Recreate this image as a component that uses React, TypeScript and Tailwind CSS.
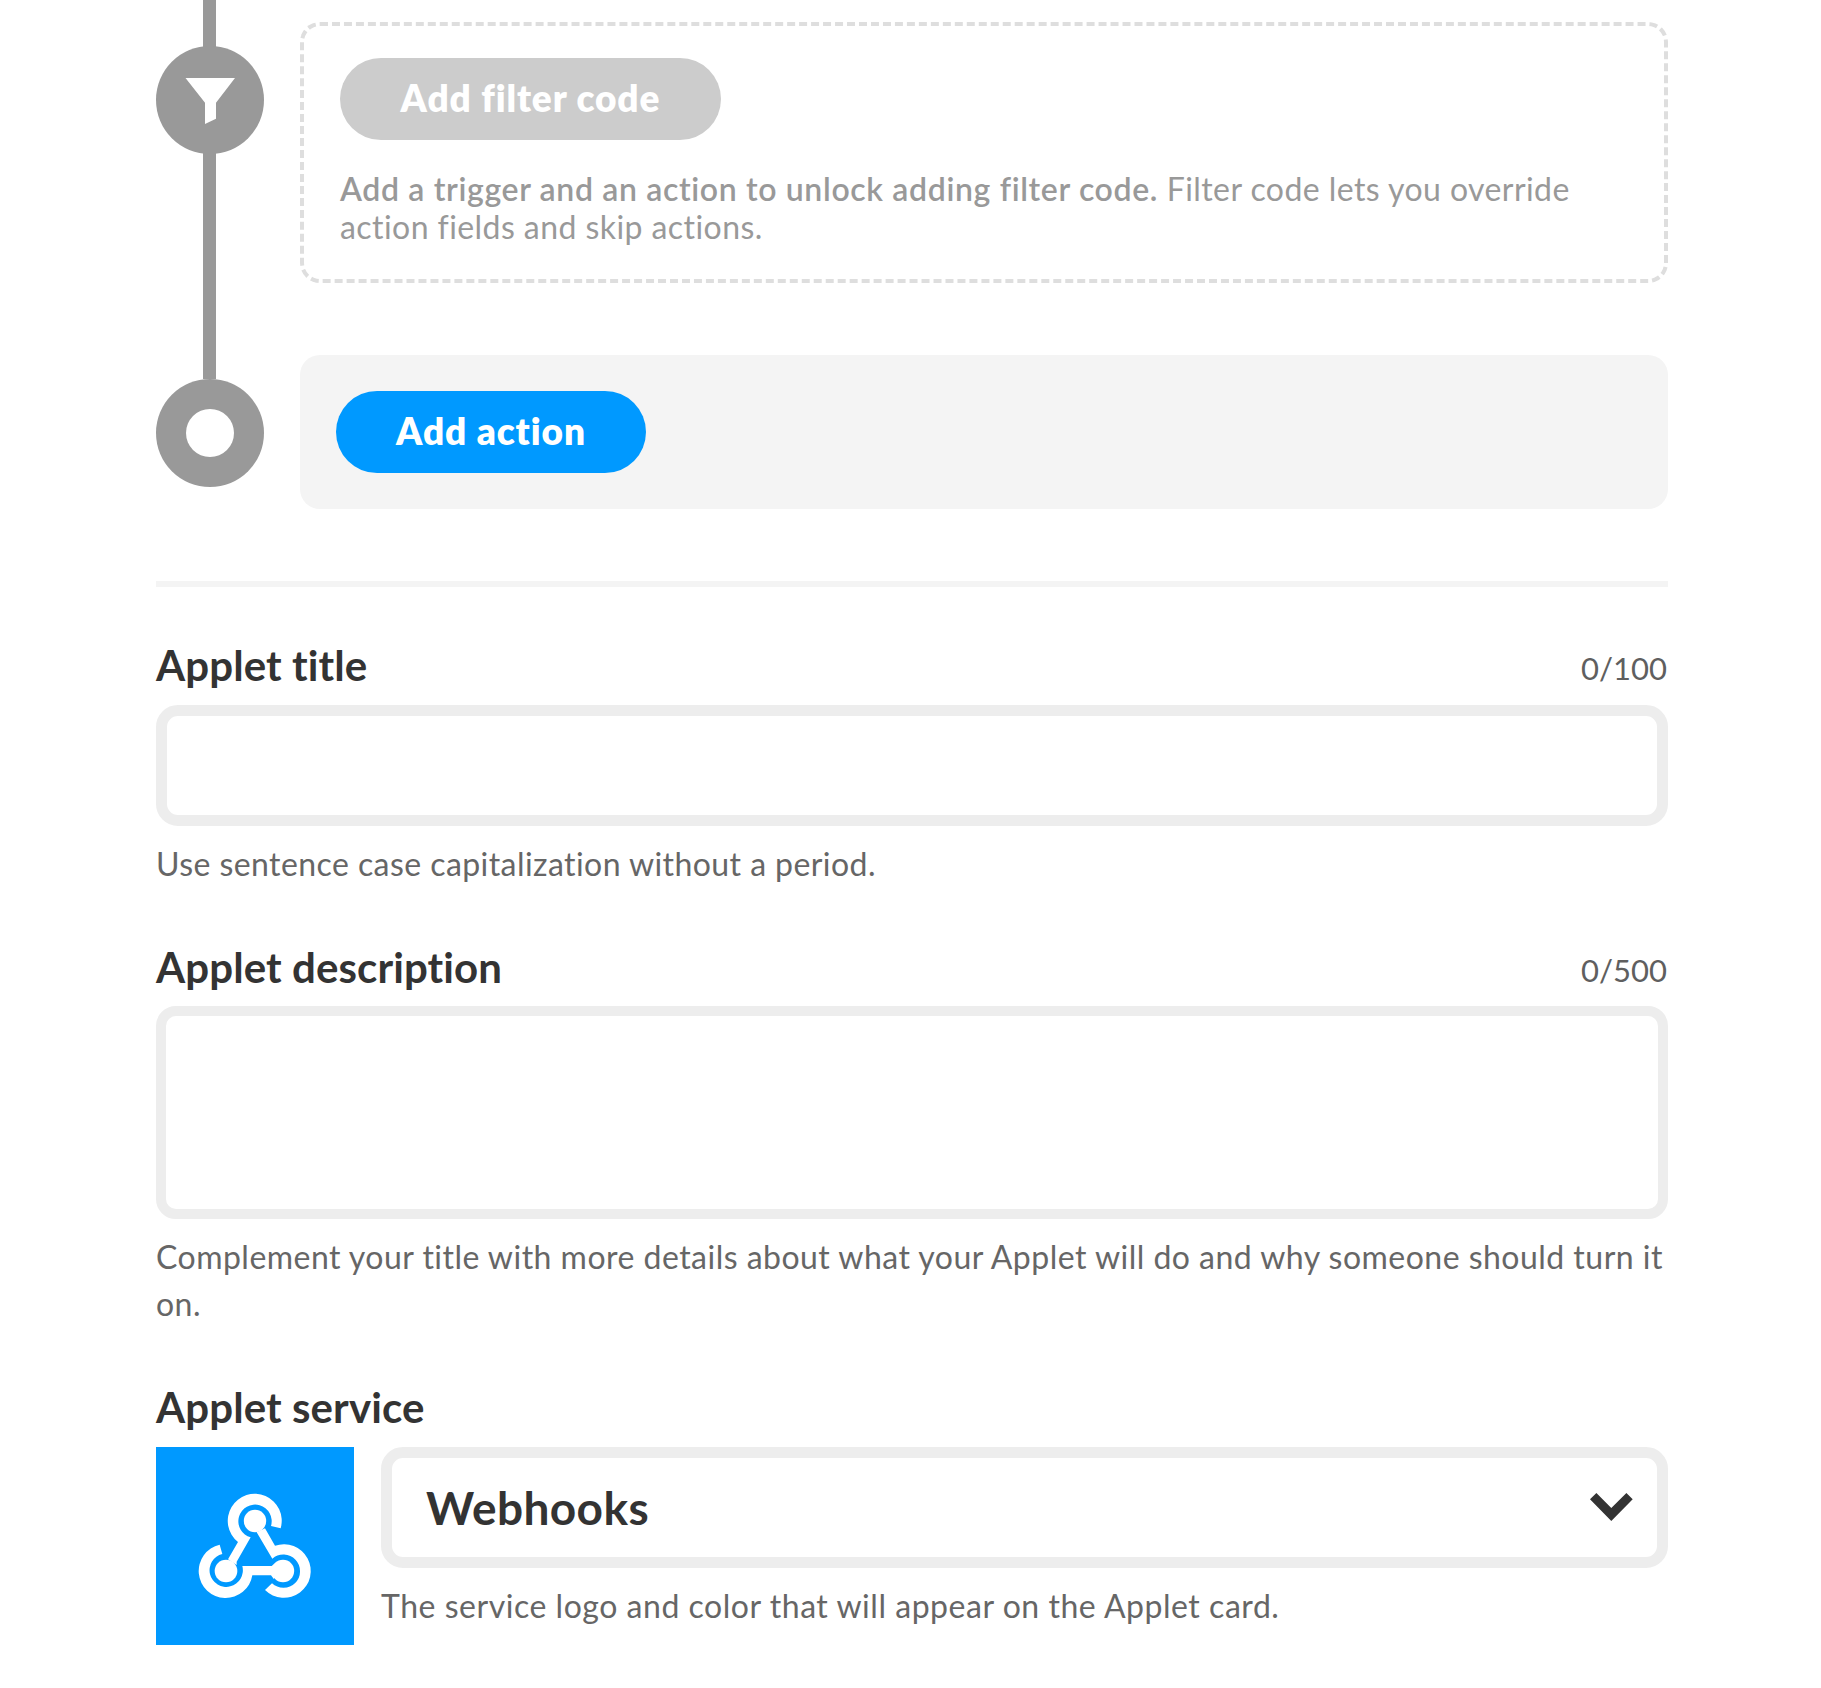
import type { ReactNode } from "react";

function FilterIcon() {
  return (
    <svg viewBox="0 0 108 108" className="size-[108px]" fill="#fff">
      <path d="M29.5 32H79L60 56.7V72.7L49 78V56.7Z" />
    </svg>
  );
}

function WebhooksLogo() {
  return (
    <svg viewBox="0 0 390 375" className="h-[125px] w-[130px]" fill="#fff">
      <circle cx="195" cy="108" r="33.5" />
      <circle cx="108" cy="258" r="34" />
      <circle cx="279" cy="258" r="33.5" />
      <path d="M272 130A81 81 0 1 0 144 171L114 223L140 240V230L182 157A50 50 0 1 1 243 123Z" />
      <path d="M89 179A81 81 0 1 0 187 271H243L252 283L258 232L245 243H157A50 50 0 1 1 97 207Z" />
      <path d="M225 315A80.5 80.5 0 1 0 255 182L225 130L200 142L247 221A50 50 0 1 1 246 295Z" />
    </svg>
  );
}

function Chevron() {
  return (
    <svg viewBox="0 0 43 28" className="mb-px h-7 w-[43px]" fill="#333">
      <path d="M0 6.3L6.4 0L21.3 15L36.4 0L42.7 6.3L21.3 28Z" />
    </svg>
  );
}

function Label({ children, counter }: { children: ReactNode; counter?: string }) {
  return (
    <div className="flex h-[50px] items-baseline justify-between pt-px text-[#333]">
      <label className="text-[42px] leading-[50px] font-bold tracking-[0.1px]">{children}</label>
      {counter && (
        <span className="-translate-y-px pr-px text-[31px] leading-[38px] text-[#5f5f5f]">{counter}</span>
      )}
    </div>
  );
}

function Help({ children, spacing = "tracking-[0.43px]" }: { children: ReactNode; spacing?: string }) {
  return <p className={`mt-3.5 text-[32px] leading-[47px] text-[#666] ${spacing}`}>{children}</p>;
}

export default function App() {
  return (
    <main className="min-h-[1688px] w-full bg-white pl-[156px] font-['Lato',sans-serif]">
      <div className="w-[1512px]">
        <section className="flex gap-9">
          <div className="flex w-[108px] flex-col">
            <div className="-mb-1 ml-[47px] h-[50px] w-[13px] bg-[#999]" />
            <div className="size-[108px] rounded-full bg-[#999]">
              <FilterIcon />
            </div>
            <div className="-mt-1 ml-[47px] h-[229px] w-[13px] bg-[#999]" />
            <div className="flex size-[108px] items-center justify-center rounded-full bg-[#999]">
              <div className="size-12 rounded-full bg-white" />
            </div>
          </div>
          <div className="flex flex-1 flex-col gap-[72px] pt-[22px]">
            <div className="h-[261px] rounded-[20px] border-4 border-dashed border-[#dedede] px-9 pt-8">
              <button className="flex h-[82px] w-[381px] items-center justify-center rounded-full bg-[#ccc] pb-[3px] text-[37px] font-extrabold tracking-[0.9px] text-white">
                Add filter code
              </button>
              <p className="mt-[30px] text-[32px] leading-[38px] tracking-[0.43px] text-[#999]">
                <b className="font-semibold tracking-[0.65px]">Add a trigger and an action to unlock adding filter code.</b> Filter code lets you override
                <br />
                action fields and skip actions.
              </p>
            </div>
            <div className="h-[154px] rounded-[20px] bg-[#f4f4f4] px-9 pt-9">
              <button className="flex h-[82px] w-[310px] items-center justify-center rounded-full bg-[#0099ff] pb-[3px] text-[37px] font-extrabold tracking-[0.9px] text-white">
                Add action
              </button>
            </div>
          </div>
        </section>

        <hr className="mt-[72px] mb-[52px] h-1.5 border-0 bg-[#f4f4f4]" />

        <section>
          <Label counter="0/100">Applet title</Label>
          <input className="mt-4 block h-[121px] w-full rounded-[22px] border-[11px] border-[#ededed] bg-white px-8 text-[46px] outline-none" />
          <Help>Use sentence case capitalization without a period.</Help>
        </section>

        <section className="mt-[54px]">
          <Label counter="0/500">Applet description</Label>
          <textarea className="mt-[15px] block h-[213px] w-full resize-none rounded-[20px] border-10 border-[#ededed] bg-white px-8 text-[32px] outline-none" />
          <Help spacing="tracking-[0.475px]">
            Complement your title with more details about what your Applet will do and why someone should turn it on.
          </Help>
        </section>

        <section className="mt-[54px]">
          <Label>Applet service</Label>
          <div className="mt-4 flex gap-[27px]">
            <div className="size-[198px] bg-[#0099ff] pt-[38px] pl-[34px]">
              <WebhooksLogo />
            </div>
            <div className="flex-1">
              <div className="flex h-[121px] items-center justify-between rounded-[22px] border-[11px] border-[#ededed] pr-6 pl-[34px]">
                <span className="pb-px text-[46px] font-bold tracking-[0.4px] text-[#333]">Webhooks</span>
                <Chevron />
              </div>
              <Help spacing="tracking-[0.53px]">The service logo and color that will appear on the Applet card.</Help>
            </div>
          </div>
        </section>
      </div>
    </main>
  );
}
